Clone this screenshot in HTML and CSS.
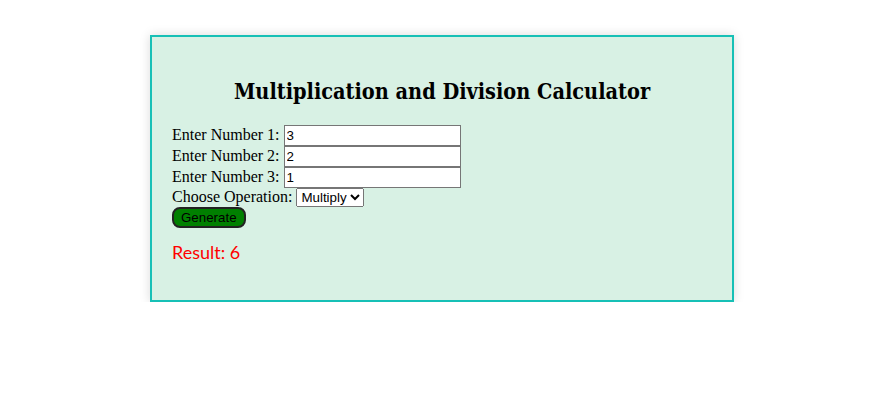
FILE: index.html
```html
<!DOCTYPE html>
<html lang="en">
<head>
    <meta charset="UTF-8">
    <meta name="viewport" content="width=device-width, initial-scale=1.0">
    <title>Multiplication and Division Calculator</title>
    <link rel="stylesheet" href="styles.css">
</head>
<body>
    <div class="calculator">
        <h2>Multiplication and Division Calculator</h2>
        <label>Enter Number 1: <input type="number" id="num1" value="3"></label><br>
        <label>Enter Number 2: <input type="number" id="num2" value="2"></label><br>
        <label>Enter Number 3: <input type="number" id="num3" value="1"></label><br>
        <label>Choose Operation: <select id="operation">
            <option value="multiply">Multiply</option>
            <option value="divide">Divide</option>
        </select></label><br>
        <button class="generate" onclick="generate()">Generate</button>
        <p class="result" id="result">Result: 6</p>
    </div>
    <script>
        function generate() {
            let n1 = parseFloat(document.getElementById("num1").value) || 0;
            let n2 = parseFloat(document.getElementById("num2").value) || 0;
            let n3 = parseFloat(document.getElementById("num3").value) || 0;
            let op = document.getElementById("operation").value;
            let result;

            if (op === "multiply") {
                result = n1 * n2 * n3;
            } else {
                if (n2 === 0 || n3 === 0) {
                    document.getElementById("result").textContent = "Result: Cannot divide by zero";
                    return;
                }
                result = n1 / n2 / n3;
            }
            document.getElementById("result").textContent = "Result: " + result;
        }
    </script>
</body>
</html>
```

FILE: styles.css
```css
body {
    margin: 8px;
    font-family: "Liberation Serif", "Times New Roman", serif;
    font-size: 16px;
}
.calculator {
    width: 540px;
    margin: 27px 0 0 142px;
    padding: 20px;
    border: 2px solid #17c0b6;
    background-color: #d8f1e4;
    box-shadow: 0 0 10px rgba(0, 0, 0, 0.15);
}
h2 {
    text-align: center;
    font-family: "DejaVu Serif", "Liberation Serif", serif;
    font-stretch: condensed;
    font-size: 21.5px;
    margin: 22px 0 21px;
}
input {
    width: 177px;
    height: 21px;
    box-sizing: border-box;
    font-family: "Liberation Sans", Arial, sans-serif;
    font-size: 13.33px;
    padding: 1px 2px;
    border: 1px solid #767676;
    margin: 0;
}
select {
    font-family: "Liberation Sans", Arial, sans-serif;
    font-size: 13.33px;
}
.generate {
    background-color: green;
    color: black;
    border: 2px solid #222;
    border-radius: 8px;
    padding: 1px 7px;
    font-family: "Liberation Sans", Arial, sans-serif;
    font-size: 13.33px;
    cursor: pointer;
}
.result {
    color: red;
    font-family: Lato, "Open Sans", sans-serif;
    font-size: 18px;
    margin: 13px 0 17px;
}
```
